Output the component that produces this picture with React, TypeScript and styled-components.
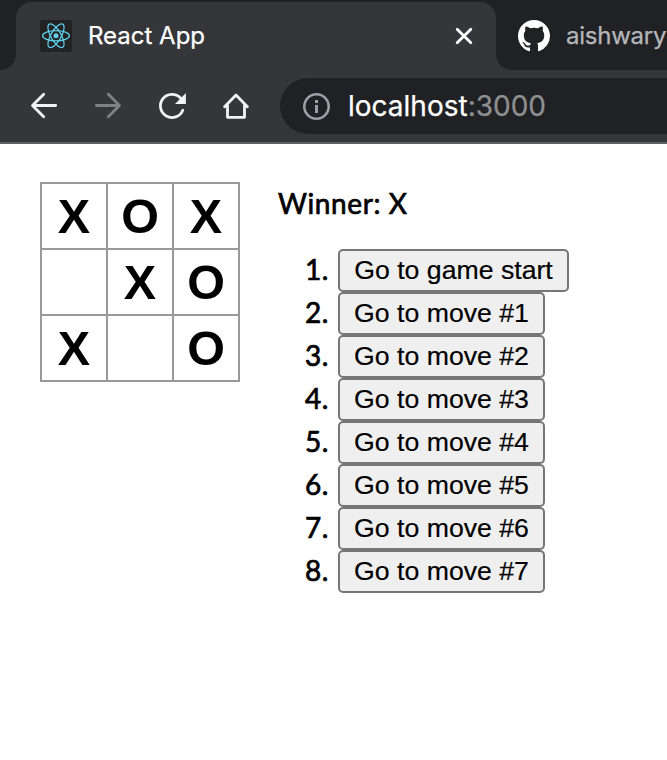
import React from "react";
import styled, { createGlobalStyle } from "styled-components";

const GlobalStyle = createGlobalStyle`
  * { box-sizing: border-box; }
  html, body { margin: 0; background: #fff; overflow: hidden; }
`;

const Page = styled.div`
  width: 100%;
  height: 760px;
  overflow: hidden;
  background: #fff;
`;

const TabStrip = styled.div`
  display: flex;
  height: 70px;
  overflow: hidden;
  background: linear-gradient(#202124 0 35px, #35363a 35px);
`;

const PreviousTab = styled.div`
  flex: none;
  width: 16px;
  background: #202124;
  border-bottom-right-radius: 16px;
`;

const ActiveTab = styled.div`
  flex: none;
  display: flex;
  align-items: center;
  width: 480px;
  height: 68px;
  margin-top: 2px;
  padding: 0 22px 0 24px;
  background: #35363a;
  border-radius: 16px 16px 0 0;
`;

const NextTab = styled.div`
  flex: none;
  display: flex;
  align-items: center;
  width: 220px;
  padding: 2px 0 0 22px;
  background: #202124;
  border-bottom-left-radius: 16px;
`;

const TabTitle = styled.span<{ $muted?: boolean }>`
  flex: 1;
  margin-left: 16px;
  font: 400 24px/30px Inter, sans-serif;
  letter-spacing: ${(p) => (p.$muted ? "-0.25px" : "0px")};
  color: ${(p) => (p.$muted ? "#b5b7ba" : "#fff")};
  -webkit-text-stroke: 0.25px currentColor;
  white-space: nowrap;
`;

const Icon = styled.svg`
  display: block;
  flex: none;
`;

const Toolbar = styled.div`
  display: flex;
  align-items: center;
  height: 74px;
  padding: 0 0 0 28px;
  background: #35363a;
  border-bottom: 2px solid #5e5f63;
`;

const NavButtons = styled.div`
  display: flex;
  gap: 32px;
  width: 252px;
`;

const AddressBar = styled.div`
  flex: 1;
  display: flex;
  align-items: center;
  height: 56px;
  padding-left: 20px;
  background: #202124;
  border-radius: 28px 0 0 28px;
`;

const Address = styled.span`
  margin-left: 16px;
  font: 400 28px/34px Inter, sans-serif;
  letter-spacing: 0;
  color: #fff;
  -webkit-text-stroke: 0.25px currentColor;
`;

const Port = styled.span`
  color: #8f9092;
`;

const Game = styled.main`
  display: flex;
  align-items: flex-start;
  gap: 38px;
  padding: 38px 40px;
`;

const Board = styled.div`
  flex: none;
  display: grid;
  grid-template-columns: repeat(3, 64px);
  grid-auto-rows: 64px;
  gap: 2px;
  padding: 2px;
  background: #999;
`;

const Square = styled.button`
  padding: 0;
  border: 0;
  background: #fff;
  color: #000;
  font: 700 48.5px/64px "Liberation Sans", Arial, sans-serif;
`;

const GameInfo = styled.div`
  color: #000;
  font: 400 28px/42px Lato, sans-serif;
  -webkit-text-stroke: 0.7px #000;
`;

const Status = styled.div`
  letter-spacing: 0.6px;
`;

const Moves = styled.ol`
  list-style: none;
  margin: 25px 0 0;
  padding: 0;
`;

const Move = styled.li`
  display: flex;
  height: 43px;
`;

const MoveNumber = styled.span`
  width: 51px;
  margin-right: 9px;
  line-height: 40px;
  letter-spacing: 0.6px;
  text-align: right;
`;

const MoveButton = styled.button<{ $wide?: boolean }>`
  width: ${(p) => (p.$wide ? 231 : 207)}px;
  height: 43px;
  padding: 0 0 1px;
  border: 2px solid #767676;
  border-radius: 5px;
  background: #efefef;
  color: #000;
  font: 400 26.67px/38px "Liberation Sans", Arial, sans-serif;
  white-space: nowrap;
  -webkit-text-stroke: 0.2px #000;
`;

const ReactLogo = () => (
  <Icon width="32" height="32" viewBox="0 0 32 32">
    <rect width="32" height="32" rx="3" fill="#222" />
    <g fill="none" stroke="#61cdec" strokeWidth="1.25">
      <ellipse cx="16" cy="15.7" rx="13.4" ry="5.1" />
      <ellipse cx="16" cy="15.7" rx="13.4" ry="5.1" transform="rotate(60 16 15.7)" />
      <ellipse cx="16" cy="15.7" rx="13.4" ry="5.1" transform="rotate(120 16 15.7)" />
    </g>
    <circle cx="16" cy="15.7" r="2.5" fill="#61cdec" />
  </Icon>
);

const GithubLogo = () => (
  <Icon width="32" height="32" viewBox="0 0 16 16" fill="#fff">
    <path d="M8 0C3.58 0 0 3.58 0 8c0 3.54 2.29 6.53 5.47 7.59.4.07.55-.17.55-.38 0-.19-.01-.82-.01-1.49-2.01.37-2.53-.49-2.69-.94-.09-.23-.48-.94-.82-1.13-.28-.15-.68-.52-.01-.53.63-.01 1.08.58 1.23.82.72 1.21 1.87.87 2.33.66.07-.52.28-.87.51-1.07-1.78-.2-3.64-.89-3.64-3.95 0-.87.31-1.59.82-2.15-.08-.2-.36-1.02.08-2.12 0 0 .67-.21 2.2.82.64-.18 1.32-.27 2-.27.68 0 1.36.09 2 .27 1.53-1.04 2.2-.82 2.2-.82.44 1.1.16 1.92.08 2.12.51.56.82 1.27.82 2.15 0 3.07-1.87 3.75-3.65 3.95.29.25.54.73.54 1.48 0 1.07-.01 1.93-.01 2.2 0 .21.15.46.55.38A8.01 8.01 0 0 0 16 8c0-4.42-3.58-8-8-8z" />
  </Icon>
);

const CloseIcon = () => (
  <Icon width="20" height="20" viewBox="0 0 20 20" stroke="#fff" strokeWidth="2.8" strokeLinecap="round">
    <path d="M3.2 3.2 L16.8 16.8 M16.8 3.2 L3.2 16.8" />
  </Icon>
);

const BackIcon = () => (
  <Icon width="32" height="32" viewBox="0 0 32 32" fill="none" stroke="#f1f3f4" strokeWidth="2.8" strokeLinecap="round" strokeLinejoin="round">
    <path d="M27.7 15.5 H5 M15.7 4.3 L4.5 15.5 L15.7 26.7" />
  </Icon>
);

const ForwardIcon = () => (
  <Icon width="32" height="32" viewBox="0 0 32 32" fill="none" stroke="#808184" strokeWidth="2.8" strokeLinecap="round" strokeLinejoin="round">
    <path d="M4.3 15.5 H27 M16.3 4.3 L27.5 15.5 L16.3 26.7" />
  </Icon>
);

const ReloadIcon = () => (
  <Icon width="32" height="32" viewBox="0 0 32 32">
    <path d="M26.8 20.2 A11.6 11.6 0 1 1 24.5 8" fill="none" stroke="#f1f3f4" strokeWidth="2.8" strokeLinecap="round" />
    <path d="M29.9 3.1 V14 H19Z" fill="#f1f3f4" />
  </Icon>
);

const HomeIcon = () => (
  <Icon width="32" height="32" viewBox="0 0 32 32" fill="none" stroke="#f1f3f4" strokeWidth="2.8" strokeLinejoin="round" strokeLinecap="round">
    <path d="M4.6 16.8 L16 5.1 L27.4 16.8 M7.5 15.2 V27.3 H24.5 V15.2" />
  </Icon>
);

const InfoIcon = () => (
  <Icon width="32" height="32" viewBox="0 0 32 32">
    <circle cx="16.5" cy="16.5" r="12.2" fill="none" stroke="#9aa0a6" strokeWidth="2.6" />
    <path d="M15 10h3v3h-3z M15 15h3v8h-3z" fill="#9aa0a6" />
  </Icon>
);

const squares = ["X", "O", "X", "", "X", "O", "X", "", "O"];
const moves = Array.from({ length: 8 }, (_, i) => (i === 0 ? "Go to game start" : `Go to move #${i}`));

export default function App() {
  return (
    <Page>
      <GlobalStyle />
      <TabStrip>
        <PreviousTab />
        <ActiveTab>
          <ReactLogo />
          <TabTitle>React App</TabTitle>
          <CloseIcon />
        </ActiveTab>
        <NextTab>
          <GithubLogo />
          <TabTitle $muted>aishwary</TabTitle>
        </NextTab>
      </TabStrip>
      <Toolbar>
        <NavButtons>
          <BackIcon />
          <ForwardIcon />
          <ReloadIcon />
          <HomeIcon />
        </NavButtons>
        <AddressBar>
          <InfoIcon />
          <Address>
            localhost<Port>:3000</Port>
          </Address>
        </AddressBar>
      </Toolbar>
      <Game>
        <Board>
          {squares.map((value, i) => (
            <Square key={i}>{value}</Square>
          ))}
        </Board>
        <GameInfo>
          <Status>Winner: X</Status>
          <Moves>
            {moves.map((label, i) => (
              <Move key={label}>
                <MoveNumber>{i + 1}.</MoveNumber>
                <MoveButton $wide={i === 0}>{label}</MoveButton>
              </Move>
            ))}
          </Moves>
        </GameInfo>
      </Game>
    </Page>
  );
}
